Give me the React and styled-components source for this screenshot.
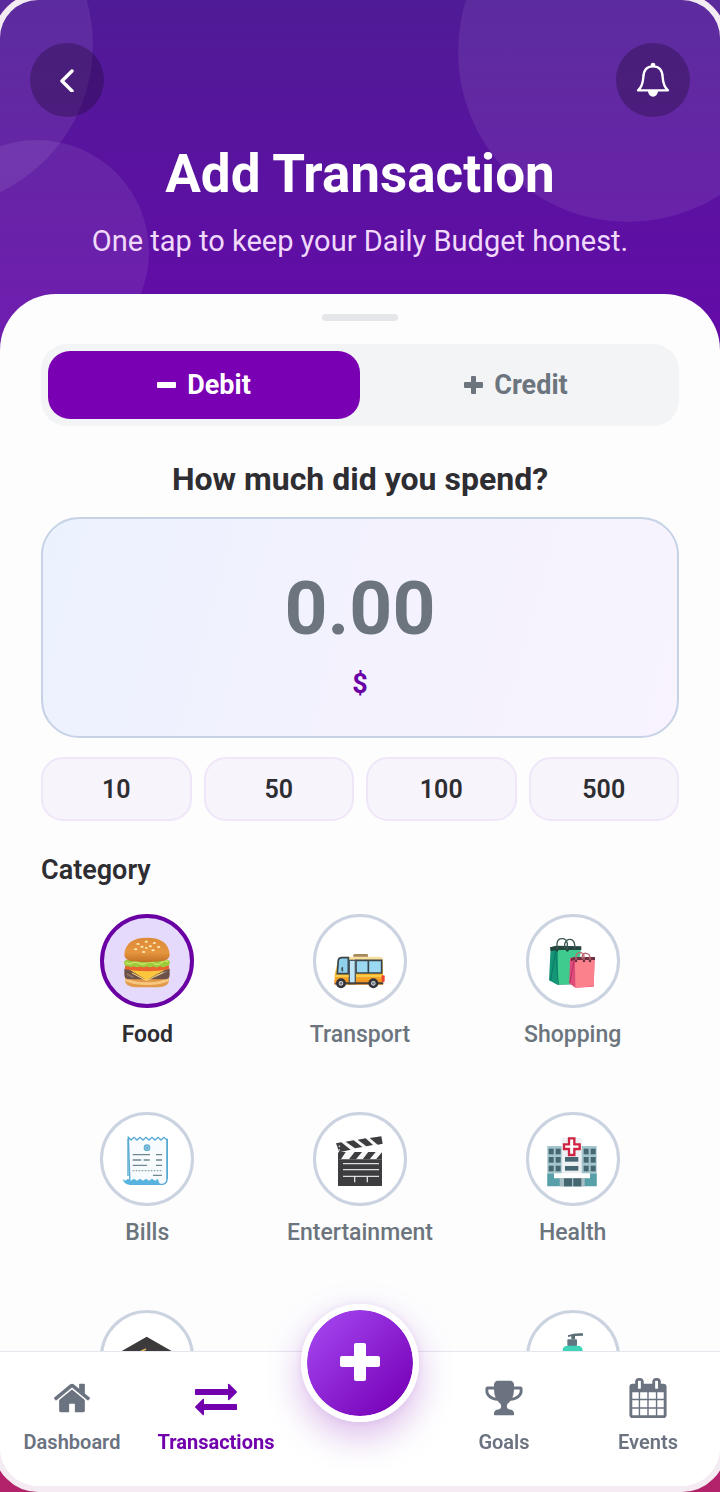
import React, { useState } from "react";
import styled, { createGlobalStyle } from "styled-components";

const GlobalStyle = createGlobalStyle`
  * { box-sizing: border-box; }
  body { margin: 0; }
  button, input { font: inherit; }
  h1, h2, p { margin: 0; }
`;

const Backdrop = styled.div`
  height: 100vh;
  overflow: hidden;
  background: linear-gradient(180deg, #5a2a9c 0%, #b3226a 100%);
  font-family: Roboto, "Liberation Sans", sans-serif;
  color: #2d2d32;
`;

const Frame = styled.div`
  height: calc(100% + 6px);
  margin: -6px -6px 0;
  border: 6px solid #f4ebf3;
  border-radius: 44px;
  background: #f4ebf3;
`;

const Screen = styled.div`
  height: 100%;
  display: flex;
  flex-direction: column;
  overflow: hidden;
  border-radius: 38px;
  background: #fdfdfe;
`;

const Hero = styled.header`
  position: relative;
  flex: none;
  overflow: hidden;
  padding: 43px 30px 92px;
  background: linear-gradient(180deg, #4f1b96 0%, #650aa9 100%);
  text-align: center;
`;

const Bubble = styled.span`
  position: absolute;
  top: ${(p) => p.$top}px;
  left: ${(p) => p.$left};
  width: ${(p) => p.$size}px;
  height: ${(p) => p.$size}px;
  border-radius: 50%;
  background: rgba(255, 255, 255, 0.08);
`;

const HeroBar = styled.div`
  position: relative;
  display: flex;
  justify-content: space-between;
`;

const RoundButton = styled.button`
  display: grid;
  place-items: center;
  width: 74px;
  height: 74px;
  padding: 0;
  border: 0;
  border-radius: 50%;
  background: rgba(30, 10, 50, 0.34);
  cursor: pointer;
`;

const Title = styled.h1`
  position: relative;
  margin-top: 27px;
  font-size: 53px;
  line-height: 60px;
  font-weight: 700;
  color: #fff;
`;

const Subtitle = styled.p`
  position: relative;
  margin-top: 20px;
  font-size: 29px;
  line-height: 34px;
  color: #f0d9fb;
`;

const Sheet = styled.main`
  position: relative;
  flex: 1;
  min-height: 0;
  margin-top: -56px;
  padding: 20px 41px 0;
  overflow-y: auto;
  scrollbar-width: none;
  border-radius: 56px 56px 0 0;
  background: #fdfdfe;
`;

const Handle = styled.div`
  width: 76px;
  height: 7px;
  margin: 0 auto 23px;
  border-radius: 4px;
  background: #e5e6ea;
`;

const Segments = styled.div`
  display: grid;
  grid-template-columns: 1fr 1fr;
  padding: 7px;
  border-radius: 26px;
  background: #f3f4f6;
`;

const Segment = styled.button`
  display: flex;
  align-items: center;
  justify-content: center;
  gap: 11px;
  height: 68px;
  padding: 0;
  border: 0;
  border-radius: 22px;
  background: ${(p) => (p.$active ? "#7a00b3" : "transparent")};
  color: ${(p) => (p.$active ? "#fff" : "#6c757d")};
  font-size: 27px;
  font-weight: 700;
  cursor: pointer;
`;

const Question = styled.label`
  display: block;
  margin: 35px 0 20px;
  font-size: 32px;
  line-height: 36px;
  font-weight: 700;
  text-align: center;
`;

const AmountCard = styled.div`
  display: flex;
  flex-direction: column;
  align-items: center;
  gap: 20px;
  padding: 49px 24px 36px;
  border: 2px solid #c6d2e6;
  border-radius: 38px;
  background: linear-gradient(105deg, #ebf2fe 0%, #f3f2fd 50%, #f8f3fe 100%);
`;

const AmountInput = styled.input`
  width: 100%;
  height: 80px;
  padding: 0;
  border: 0;
  outline: 0;
  background: transparent;
  color: #2d2d32;
  font-size: 75px;
  font-weight: 700;
  text-align: center;
  &::placeholder { color: #6c757d; opacity: 1; }
`;

const Currency = styled.span`
  font-size: 27px;
  line-height: 32px;
  font-weight: 700;
  color: #6a00a3;
`;

const Presets = styled.div`
  display: grid;
  grid-template-columns: repeat(4, 1fr);
  gap: 12px;
  margin-top: 19px;
`;

const Preset = styled.button`
  height: 64px;
  padding: 0;
  border: 2px solid #f0e6f9;
  border-radius: 22px;
  background: #f7f4fb;
  color: #2d2d32;
  font-size: 25px;
  font-weight: 600;
  cursor: pointer;
`;

const SectionTitle = styled.h2`
  margin: 33px 0 28px;
  font-size: 27px;
  line-height: 32px;
  font-weight: 600;
`;

const Categories = styled.div`
  display: grid;
  grid-template-columns: repeat(3, 1fr);
  row-gap: 63px;
`;

const Category = styled.button`
  display: flex;
  flex-direction: column;
  align-items: center;
  gap: 13px;
  padding: 0;
  border: 0;
  background: none;
  color: ${(p) => (p.$active ? "#2d2d32" : "#6c757d")};
  font-size: 23px;
  line-height: 28px;
  font-weight: ${(p) => (p.$active ? 600 : 500)};
  cursor: pointer;
`;

const Ring = styled.span`
  display: grid;
  place-items: center;
  width: 94px;
  height: 94px;
  border: ${(p) => (p.$active ? "4px solid #6a00a3" : "3px solid #cbd3e0")};
  border-radius: 50%;
  background: ${(p) => (p.$active ? "#e5dafb" : "#fff")};
`;

const TabBar = styled.nav`
  position: relative;
  flex: none;
  display: grid;
  grid-template-columns: repeat(5, 1fr);
  justify-items: center;
  align-items: start;
  padding-bottom: 32px;
  border-top: 1px solid #e6e7ee;
  background: #fff;
`;

const Tab = styled.a`
  display: flex;
  flex-direction: column;
  align-items: center;
  gap: 10px;
  padding-top: 24px;
  color: ${(p) => (p.$active ? "#7200ad" : "#6b7280")};
  font-size: 20px;
  line-height: 24px;
  font-weight: ${(p) => (p.$active ? 700 : 600)};
  text-decoration: none;
`;

const TabIcon = styled.span`
  display: grid;
  place-items: center;
  height: 44px;
`;

const AddButton = styled.button`
  display: grid;
  place-items: center;
  width: 118px;
  height: 118px;
  margin: -48px 0 -60px;
  padding: 0;
  border: 6px solid #fff;
  border-radius: 50%;
  background: linear-gradient(135deg, #a84bf4 0%, #7a06bb 85%) padding-box;
  box-shadow: 0 14px 36px rgba(122, 0, 179, 0.28), 0 0 8px rgba(122, 0, 179, 0.08);
  cursor: pointer;
`;

const Glyph = ({ d, size }) => (
  <svg width={size} height={size} viewBox="0 0 1792 1792" fill="currentColor" aria-hidden="true">
    <path d={d} />
  </svg>
);

const HOME =
  "M1472 992v480q0 26-19 45t-45 19h-384v-384h-256v384h-384q-26 0-45-19t-19-45v-480q0-1 .5-3t.5-3l575-474 575 474q1 2 1 6zm223-69l-62 74q-8 9-21 11h-3q-13 0-21-7l-692-577-692 577q-12 8-24 7-13-2-21-11l-62-74q-8-10-7-23.500t11-21.500l719-599q32-26 76-26t76 26l244 204v-195q0-14 9-23t23-9h192q14 0 23 9t9 23v408l219 182q10 8 11 21.500t-7 23.500z";
const EXCHANGE =
  "M1792 1184v192q0 13-9.500 22.500t-22.500 9.500h-1376v192q0 13-9.500 22.500t-22.500 9.500q-12 0-24-10l-319-320q-9-9-9-22 0-14 9-23l320-320q9-9 23-9 13 0 22.500 9.500t9.500 22.500v192h1376q13 0 22.500 9.500t9.500 22.500zm0-544q0 14-9 23l-320 320q-9 9-23 9-13 0-22.500-9.500t-9.500-22.500v-192h-1376q-13 0-22.500-9.500t-9.500-22.500v-192q0-13 9.500-22.500t22.500-9.500h1376v-192q0-14 9-23t23-9q12 0 24 10l319 319q9 9 9 23z";
const TROPHY =
  "M522 883q-74-162-74-371h-256v96q0 78 94.500 162t235.500 113zm1078-275v-96h-256q0 209-74 371 141-29 235.500-113t94.500-162zm128-128v128q0 71-41.500 143t-112 130-173 97.500-215.500 44.500q-42 54-95 95-38 34-52.500 72.500t-14.500 89.500q0 54 30.500 91t97.500 37q75 0 133.500 45.500t58.500 114.500v64q0 14-9 23t-23 9h-832q-14 0-23-9t-9-23v-64q0-69 58.500-114.500t133.500-45.500q67 0 97.500-37t30.500-91q0-51-14.500-89.500t-52.500-72.500q-53-41-95-95-113-5-215.500-44.500t-173-97.500-112-130-41.500-143v-128q0-40 28-68t68-28h288v-96q0-66 47-113t113-47h576q66 0 113 47t47 113v96h288q40 0 68 28t28 68z";
const CALENDAR =
  "M192 1664h288v-288h-288v288zm352 0h320v-288h-320v288zm-352-352h288v-320h-288v320zm352 0h320v-320h-320v320zm-352-384h288v-288h-288v288zm736 736h320v-288h-320v288zm-384-736h320v-288h-320v288zm768 736h288v-288h-288v288zm-384-352h320v-320h-320v320zm-352-864v-288q0-13-9.500-22.500t-22.500-9.500h-64q-13 0-22.500 9.500t-9.500 22.500v288q0 13 9.500 22.500t22.500 9.500h64q13 0 22.500-9.500t9.500-22.500zm736 864h288v-320h-288v320zm-384-384h320v-288h-320v288zm384 0h288v-288h-288v288zm32-480v-288q0-13-9.500-22.500t-22.500-9.500h-64q-13 0-22.500 9.500t-9.500 22.500v288q0 13 9.500 22.500t22.500 9.500h64q13 0 22.500-9.500t9.500-22.500zm384-64v1280q0 52-38 90t-90 38h-1408q-52 0-90-38t-38-90v-1280q0-52 38-90t90-38h128v-96q0-66 47-113t113-47h64q66 0 113 47t47 113v96h384v-96q0-66 47-113t113-47h64q66 0 113 47t47 113v96h128q52 0 90 38t38 90z";

const BackIcon = () => (
  <svg width="24" height="24" viewBox="0 0 24 24" fill="none" stroke="#fff" strokeWidth="3.4" strokeLinecap="round" strokeLinejoin="round" aria-hidden="true">
    <path d="M17 3 7 13l10 10" />
  </svg>
);

const BellIcon = () => (
  <svg width="36" height="36" viewBox="0 0 108 108" aria-hidden="true">
    <path d="M9 85Q23 73 25 46Q26 13 54 13Q82 13 83 46Q85 73 99 85Z" fill="none" stroke="#fff" strokeWidth="7" strokeLinejoin="round" />
    <circle cx="54" cy="9" r="7" fill="#fff" />
    <path d="M39 87a15 17 0 0 0 30 0z" fill="#fff" />
  </svg>
);

const SignIcon = ({ plus }) => (
  <svg width="19" height="19" viewBox="0 0 19 19" fill="currentColor" aria-hidden="true">
    <rect x="0" y="6" width="19" height="6" rx="1" />
    {plus && <rect x="7" y="0" width="5" height="18" rx="1" />}
  </svg>
);

const Art = ({ children }) => (
  <svg width="56" height="56" viewBox="-3 -3 168 168" aria-hidden="true">{children}</svg>
);

const Burger = () => (
  <Art>
    <defs>
      <linearGradient id="bun" x1="0" y1="0" x2="0" y2="1">
        <stop offset="0" stopColor="#dd8a36" />
        <stop offset=".6" stopColor="#e6963f" />
        <stop offset="1" stopColor="#c26f25" />
      </linearGradient>
    </defs>
    <path d="M15 128h132v10q0 22-34 22H49q-34 0-34-22z" fill="#e39a48" />
    <path d="M15 128q20 17 66 17t66-17l-2 14q-20 11-64 11t-64-11z" fill="#f7c77f" />
    <path d="M13 104h136v18q0 14-16 14H29q-16 0-16-14z" fill="#6b5148" />
    <path d="M20 120l20 10M108 126l32-14" stroke="#8c7669" strokeWidth="5" />
    <path d="M24 104h116l-54 31q-6 4-12 0z" fill="#fcc63d" />
    <path d="M36 117l38 20q6 3 12 0l44-22" fill="none" stroke="#ffe08a" strokeWidth="3" />
    <path d="M15 94h132v12q-66 12-132 0z" fill="#e8652f" />
    <path d="M12 84Q16 76 30 76h102q14 0 18 8-2 14-12 12-8 8-18 0-10 8-20 1-10 6-20 0-10 6-20 0-9 6-18 0-10 5-17-1-12 4-13-12z" fill="#9ccc3c" />
    <path d="M18 86q10 6 20 1t20 1 22-1 22 1 22-2 20-2" fill="none" stroke="#c8e66a" strokeWidth="4" />
    <path d="M13 62Q16 11 81 11t68 51q0 18-28 20-40 5-80 0-28-2-28-20z" fill="url(#bun)" />
    <g fill="#ffe9b5">
      <ellipse cx="54" cy="30" rx="5" ry="3" /><ellipse cx="79" cy="23" rx="5" ry="3" />
      <ellipse cx="103" cy="27" rx="5" ry="3" /><ellipse cx="66" cy="38" rx="5" ry="3" />
      <ellipse cx="91" cy="37" rx="5" ry="3" /><ellipse cx="116" cy="39" rx="5" ry="3" />
      <ellipse cx="47" cy="46" rx="5" ry="3" /><ellipse cx="79" cy="42" rx="4" ry="3" />
      <ellipse cx="99" cy="49" rx="5" ry="3" /><ellipse cx="71" cy="54" rx="5" ry="3" />
    </g>
  </Art>
);

const Bus = () => (
  <Art>
    <defs>
      <linearGradient id="busBody" x1="0" y1="0" x2="0" y2="1">
        <stop offset="0" stopColor="#f6e3a8" />
        <stop offset=".6" stopColor="#fbb52c" />
        <stop offset="1" stopColor="#ee8a1c" />
      </linearGradient>
    </defs>
    <rect x="61" y="60" width="44" height="12" rx="4" fill="#a8875d" />
    <path d="M14 80q3-12 14-12h110q12 0 12 12v72H5v-28z" fill="url(#busBody)" />
    <path d="M16 78q2-7 10-7h20v48H13z" fill="#8fd0ec" stroke="#38454d" strokeWidth="5" />
    <path d="M69 79h77v38H69zM106 79v38" fill="#9bd8f2" stroke="#38454d" strokeWidth="5" />
    <rect x="49" y="79" width="18" height="70" fill="#bfe5f5" stroke="#4c5b64" strokeWidth="4" />
    <path d="M6 126h41M69 126h80" stroke="#f7cc4d" strokeWidth="6" />
    <path d="M5 148h146" stroke="#4a4038" strokeWidth="6" />
    <rect x="146" y="124" width="9" height="20" rx="3" fill="#ec4632" />
    <circle cx="8" cy="143" r="5" fill="#ff9c34" />
    <path d="M29 100q-4 6 0 12" fill="none" stroke="#3a474e" strokeWidth="5" />
    <g fill="#d6dbe0" stroke="#34343a" strokeWidth="8">
      <circle cx="24" cy="148" r="11" /><circle cx="121" cy="148" r="11" />
    </g>
    <circle cx="24" cy="148" r="4" fill="#717b84" /><circle cx="121" cy="148" r="4" fill="#717b84" />
  </Art>
);

const Bags = () => (
  <Art>
    <path d="M14 40l22-3 68 2-8 112-62 1-25-13z" fill="#159578" />
    <path d="M36 40h68l-7 110-62 1z" fill="#3ecb8d" />
    <path d="M12 40l18-5 76 2v11H30l-16 4z" fill="#24463f" />
    <path d="M29 48L14 140M29 48l8 104" stroke="#087a64" strokeWidth="3" />
    <path d="M33 48V28q2-14 15-14t16 14v20M56 44V30q5-14 15-14 13 0 15 16v14" fill="none" stroke="#3c5852" strokeWidth="4" />
    <path d="M72 72l12-2h62l-3 88-55 3-18-13z" fill="#dd4c7b" />
    <path d="M87 76h59l-3 81-55 4z" fill="#fb828d" />
    <path d="M75 73l10-4h62v9H84l-9 4z" fill="#70303f" />
    <path d="M84 81l-13 66" stroke="#b92d64" strokeWidth="3" />
    <path d="M90 80V66q2-10 12-10 11 0 12 12v13M109 76V64q4-7 11-6 11 1 12 12v10" fill="none" stroke="#be6975" strokeWidth="4" />
    <g fill="#24463f"><circle cx="33" cy="49" r="4" /><circle cx="64" cy="49" r="4" /></g>
    <g fill="#70303f"><circle cx="90" cy="81" r="4" /><circle cx="114" cy="81" r="4" /><circle cx="132" cy="81" r="4" /></g>
  </Art>
);

const Receipt = () => (
  <Art>
    <path d="M25 16l8 8 9-8 9 8 9-8 9 8 9-8 9 8 9-8 9 8 9-8 9 8 9-8 9 8V142q0 14-14 15H30z" fill="#f7fbfd" stroke="#55a9d3" strokeWidth="4" />
    <path d="M24 20v112M142 20v122" stroke="#55a9d3" strokeWidth="4" />
    <path d="M8 141l8 5 8-6 9 6 9-6 9 6 9-6 9 6 9-6 9 6 9-6 9 6 9-6q2 18 14 18H29Q11 157 8 141z" fill="#58b3df" />
    <circle cx="81" cy="47" r="10" fill="#65add0" />
    <circle cx="81" cy="47" r="5" fill="none" stroke="#a6d7ea" strokeWidth="2" />
    <path d="M38 68h52M108 68h18M38 84h26M71 84h18M108 84h18M38 100h43M108 100h18M99 130h27" stroke="#70868e" strokeWidth="4" />
    <path d="M38 116h90" stroke="#8fa5ad" strokeWidth="4" strokeDasharray="5 4" />
  </Art>
);

const Clapper = () => (
  <Art>
    <path d="M15 61h132v101H15z" fill="#3d3d3f" />
    <path d="M9 34L145 14l4 22L19 61h-5z" fill="#f7f7f7" />
    <path d="M9 34l16-3 28 22-34 8zM38 29l24-4 26 20-22 4zM74 23l24-4 22 20-20 4zM110 18l35-5 4 22-15 3z" fill="#3d3d3f" />
    <path d="M18 60h129v22H18z" fill="#f7f7f7" />
    <path d="M18 60h20L24 82h-6zM65 60h22L69 82H48zM106 60h22l-18 22H89zM147 61v21h-18z" fill="#3d3d3f" />
    <path d="M30 95h108M30 113h108M30 133h108M65 133v18M103 133v18" stroke="#dedede" strokeWidth="4" />
    <circle cx="19" cy="43" r="2.500" fill="#eee" /><circle cx="19" cy="54" r="2.500" fill="#eee" />
  </Art>
);

const Hospital = () => (
  <Art>
    <path d="M4 42h148v120H4z" fill="#a5c5cd" />
    <path d="M4 125h148v38H4z" fill="#57a0aa" />
    <path d="M47 17h60v109H47z" fill="#edf0f2" />
    <path d="M24 124h108v15H24z" fill="#fff" />
    <path d="M41 138h75v25H41z" fill="#a7bdc4" />
    <g fill="#466772">
      {[50, 75, 101].map((y) => [8, 29, 113, 134].map((x) => <rect key={`${x}-${y}`} x={x} y={y} width="15" height="17" />))}
      <rect x="57" y="75" width="40" height="14" /><rect x="57" y="102" width="40" height="14" />
      <rect x="54" y="139" width="24" height="24" /><rect x="82" y="139" width="24" height="24" />
    </g>
    <path d="M69 19h16v18h16v14H85v18H69V51H54V37h15z" fill="#fff" stroke="#cf2342" strokeWidth="7" />
  </Art>
);

const GradCap = () => (
  <Art>
    <path d="M80 20l76 44-76 40L4 64z" fill="#3c3a3b" />
    <path d="M36 84l44 24 44-24v38q-44 26-88 0z" fill="#2e2c2d" />
    <path d="M78 57l-14 7-36 20v30" fill="none" stroke="#d9b65c" strokeWidth="5" />
  </Art>
);

const Plane = () => (
  <Art>
    <path d="M20 84l122-52-44 110-24-42z" fill="#7da9c9" />
  </Art>
);

const Lotion = () => (
  <Art>
    <path d="M66 16q20-8 45-6v7l-24 1v10H76V19l-10 2z" fill="#5b6e78" />
    <rect x="64" y="28" width="29" height="20" rx="3" fill="#607781" />
    <path d="M50 62q0-15 16-15h28q16 0 16 15v88q0 10-10 10H60q-10 0-10-10z" fill="#3fd3b8" />
  </Art>
);

const CATEGORIES = [
  { name: "Food", Icon: Burger },
  { name: "Transport", Icon: Bus },
  { name: "Shopping", Icon: Bags },
  { name: "Bills", Icon: Receipt },
  { name: "Entertainment", Icon: Clapper },
  { name: "Health", Icon: Hospital },
  { name: "Education", Icon: GradCap, iconOnly: true },
  { name: "Travel", Icon: Plane, iconOnly: true },
  { name: "Personal", Icon: Lotion, iconOnly: true },
];

const TabLink = ({ label, d, size = 40, active }) => (
  <Tab href="#" $active={active} aria-current={active ? "page" : undefined}>
    <TabIcon><Glyph d={d} size={size} /></TabIcon>
    {label}
  </Tab>
);

export default function App() {
  const [kind, setKind] = useState("debit");
  const [amount, setAmount] = useState("");
  const [category, setCategory] = useState("Food");

  return (
    <Backdrop>
      <GlobalStyle />
      <Frame>
        <Screen>
          <Hero>
            <Bubble $top={-118} $left="-233px" $size={326} />
            <Bubble $top={140} $left="-75px" $size={224} />
            <Bubble $top={-118} $left="calc(100% - 262px)" $size={340} />
            <HeroBar>
              <RoundButton aria-label="Back"><BackIcon /></RoundButton>
              <RoundButton aria-label="Notifications"><BellIcon /></RoundButton>
            </HeroBar>
            <Title>Add Transaction</Title>
            <Subtitle>One tap to keep your Daily Budget honest.</Subtitle>
          </Hero>
          <Sheet>
            <Handle />
            <Segments>
              <Segment $active={kind === "debit"} aria-pressed={kind === "debit"} onClick={() => setKind("debit")}>
                <SignIcon />Debit
              </Segment>
              <Segment $active={kind === "credit"} aria-pressed={kind === "credit"} onClick={() => setKind("credit")}>
                <SignIcon plus />Credit
              </Segment>
            </Segments>
            <Question htmlFor="amount">How much did you spend?</Question>
            <AmountCard>
              <AmountInput id="amount" inputMode="decimal" placeholder="0.00" value={amount} onChange={(e) => setAmount(e.target.value)} />
              <Currency>$</Currency>
            </AmountCard>
            <Presets>
              {["10", "50", "100", "500"].map((v) => (
                <Preset key={v} onClick={() => setAmount(v)}>{v}</Preset>
              ))}
            </Presets>
            <SectionTitle>Category</SectionTitle>
            <Categories>
              {CATEGORIES.map(({ name, Icon, iconOnly }) => (
                <Category
                  key={name}
                  $active={category === name}
                  aria-label={name}
                  aria-pressed={category === name}
                  onClick={() => setCategory(name)}
                >
                  <Ring $active={category === name}><Icon /></Ring>
                  {!iconOnly && name}
                </Category>
              ))}
            </Categories>
          </Sheet>
          <TabBar>
            <TabLink label="Dashboard" d={HOME} />
            <TabLink label="Transactions" d={EXCHANGE} size={42} active />
            <AddButton aria-label="Add transaction">
              <svg width="40" height="40" viewBox="0 0 40 40" fill="#fff" aria-hidden="true">
                <rect x="0" y="13" width="40" height="11" rx="2" />
                <rect x="14" y="0" width="12" height="38" rx="2" />
              </svg>
            </AddButton>
            <TabLink label="Goals" d={TROPHY} />
            <TabLink label="Events" d={CALENDAR} />
          </TabBar>
        </Screen>
      </Frame>
    </Backdrop>
  );
}
